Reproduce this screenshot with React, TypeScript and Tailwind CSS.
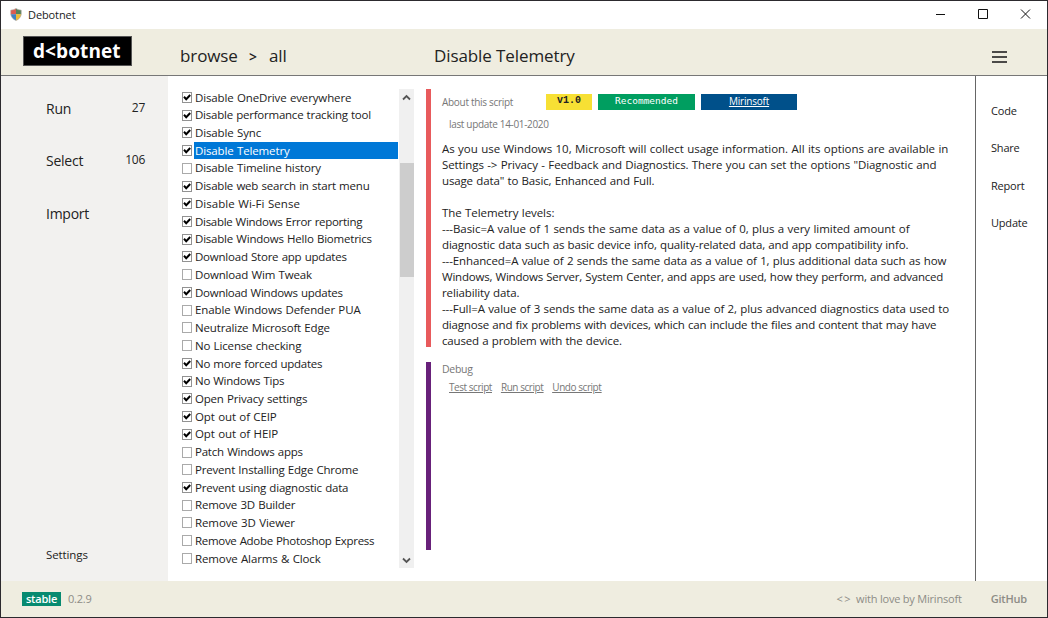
import React from "react";

type Item = { label: string; checked: boolean; tracking: string };
type Line = { text: string; tracking: string };

const items: Item[] = [
  { label: "Disable OneDrive everywhere", checked: true, tracking: "tracking-[-0.13px]" },
  { label: "Disable performance tracking tool", checked: true, tracking: "tracking-[-0.23px]" },
  { label: "Disable Sync", checked: true, tracking: "tracking-[-0.13px]" },
  { label: "Disable Telemetry", checked: true, tracking: "tracking-[-0.13px]" },
  { label: "Disable Timeline history", checked: false, tracking: "tracking-[-0.13px]" },
  { label: "Disable web search in start menu", checked: true, tracking: "tracking-[-0.2px]" },
  { label: "Disable Wi-Fi Sense", checked: true, tracking: "tracking-[0.03px]" },
  { label: "Disable Windows Error reporting", checked: true, tracking: "tracking-[-0.3px]" },
  { label: "Disable Windows Hello Biometrics", checked: true, tracking: "tracking-[-0.21px]" },
  { label: "Download Store app updates", checked: true, tracking: "tracking-[-0.22px]" },
  { label: "Download Wim Tweak", checked: false, tracking: "tracking-[-0.16px]" },
  { label: "Download Windows updates", checked: true, tracking: "tracking-[-0.26px]" },
  { label: "Enable Windows Defender PUA", checked: false, tracking: "tracking-[-0.11px]" },
  { label: "Neutralize Microsoft Edge", checked: false, tracking: "tracking-[-0.16px]" },
  { label: "No License checking", checked: false, tracking: "tracking-[-0.15px]" },
  { label: "No more forced updates", checked: true, tracking: "tracking-[-0.25px]" },
  { label: "No Windows Tips", checked: true, tracking: "tracking-[-0.27px]" },
  { label: "Open Privacy settings", checked: true, tracking: "tracking-[-0.19px]" },
  { label: "Opt out of CEIP", checked: true, tracking: "tracking-[-0.1px]" },
  { label: "Opt out of HEIP", checked: true, tracking: "tracking-[-0.08px]" },
  { label: "Patch Windows apps", checked: false, tracking: "tracking-[-0.22px]" },
  { label: "Prevent Installing Edge Chrome", checked: false, tracking: "tracking-[-0.2px]" },
  { label: "Prevent using diagnostic data", checked: true, tracking: "tracking-[-0.2px]" },
  { label: "Remove 3D Builder", checked: false, tracking: "tracking-[-0.2px]" },
  { label: "Remove 3D Viewer", checked: false, tracking: "tracking-[-0.1px]" },
  { label: "Remove Adobe Photoshop Express", checked: false, tracking: "tracking-[-0.31px]" },
  { label: "Remove Alarms & Clock", checked: false, tracking: "tracking-[-0.12px]" },
];

const description: Line[] = [
  { text: "As you use Windows 10, Microsoft will collect usage information. All its options are available in", tracking: "tracking-[-0.04px]" },
  { text: "Settings -> Privacy - Feedback and Diagnostics. There you can set the options \"Diagnostic and", tracking: "tracking-[-0.1px]" },
  { text: "usage data\" to Basic, Enhanced and Full.", tracking: "tracking-[-0.14px]" },
  { text: "", tracking: "" },
  { text: "The Telemetry levels:", tracking: "tracking-[-0.06px]" },
  { text: "---Basic=A value of 1 sends the same data as a value of 0, plus a very limited amount of", tracking: "tracking-[-0.05px]" },
  { text: "diagnostic data such as basic device info, quality-related data, and app compatibility info.", tracking: "tracking-[-0.16px]" },
  { text: "---Enhanced=A value of 2 sends the same data as a value of 1, plus additional data such as how", tracking: "tracking-[-0.12px]" },
  { text: "Windows, Windows Server, System Center, and apps are used, how they perform, and advanced", tracking: "tracking-[-0.21px]" },
  { text: "reliability data.", tracking: "tracking-[-0.12px]" },
  { text: "---Full=A value of 3 sends the same data as a value of 2, plus advanced diagnostics data used to", tracking: "tracking-[-0.1px]" },
  { text: "diagnose and fix problems with devices, which can include the files and content that may have", tracking: "tracking-[-0.18px]" },
  { text: "caused a problem with the device.", tracking: "tracking-[-0.16px]" },
];

function Shield() {
  return (
    <svg width="12" height="13" viewBox="0 0 12 13" className="mt-[7px] ml-[9px] shrink-0">
      <path d="M6 .5 4.500 1.500 .8 2.200 .8 6.500H6z" fill="#dc5b50" />
      <path d="M6 .5 7.500 1.500 11.200 2.200V6.500H6z" fill="#55845c" />
      <path d="M.8 6.200H6V12.500Q1.500 10.500 .8 6.200z" fill="#3f82c4" />
      <path d="M11.200 6.200H6V12.500Q10.500 10.500 11.200 6.200z" fill="#eebc35" />
      <path d="M6 .5Q3.700 2.200 .8 2.200V6Q1.200 10.500 6 12.500 10.800 10.500 11.200 6V2.200Q8.300 2.200 6 .5z" fill="none" stroke="#a39c92" strokeWidth=".6" />
    </svg>
  );
}

function WindowControls() {
  return (
    <svg width="100" height="28" viewBox="0 0 100 28" fill="none" stroke="#111" className="mr-[13px] ml-auto">
      <path d="M2 13.500h9M44.500 8.500h9v9h-9zM87 8.500l9 9M96 8.500l-9 9" />
    </svg>
  );
}

function CheckBox({ checked }: { checked: boolean }) {
  return (
    <svg width="10" height="11" viewBox="0 0 10 11" fill="none" className="shrink-0">
      <rect x=".5" y=".5" width="9" height="10" fill="#fff" stroke={checked ? "#929292" : "#aaa"} />
      {checked && <path d="M2 4.800 4.200 7.200 8.200 3" stroke="#000" strokeWidth="2" />}
    </svg>
  );
}

function Chevron({ down }: { down?: boolean }) {
  return (
    <svg width="9" height="7" viewBox="0 0 9 7" fill="none" stroke="#555" strokeWidth="1.800">
      <path d={down ? "M1 1.500 4.500 5 8 1.500" : "M1 5.500 4.500 2 8 5.500"} />
    </svg>
  );
}

export default function App() {
  return (
    <div className="flex h-[618px] w-[1048px] flex-col overflow-hidden border border-[#2c2a2e] bg-white font-['Open_Sans','Noto_Sans',sans-serif] text-[#222]">
      <div className="flex h-7 shrink-0">
        <Shield />
        <span className="ml-[6px] pt-[6px] text-[11px] leading-4 tracking-[-0.1px]">Debotnet</span>
        <WindowControls />
      </div>

      <header className="flex h-[47px] shrink-0 border-b border-[#777] bg-[#efede0] whitespace-nowrap">
        <div className="mt-[7px] ml-[22px] h-[30px] w-[109px] border border-[#555] bg-black pl-[9px] text-[19px] leading-[29px] font-bold tracking-[0.1px] text-white">
          d&lt;botnet
        </div>
        <div className="ml-[48px] flex w-[254px] pt-[15px] text-[17px] leading-6 tracking-[-0.1px]">
          <span className="w-[69px]">browse</span>
          <span className="w-[20px] pt-px text-[14px] font-semibold">&gt;</span>
          <span>all</span>
        </div>
        <h1 className="pt-[15px] text-[17px] leading-6 font-normal tracking-[-0.1px]">Disable Telemetry</h1>
        <svg width="15" height="12" viewBox="0 0 15 12" stroke="#4b4a48" strokeWidth="2" className="mt-[22px] mr-[40px] ml-auto">
          <path d="M0 1h15M0 6h15M0 11h15" />
        </svg>
      </header>

      <main className="flex min-h-0 flex-1">
        <nav className="flex w-[167px] shrink-0 flex-col bg-[#f2f1ef] pt-[21px] pl-[45px] text-[14px] leading-6 tracking-[-0.25px]">
          <div className="flex h-[52px] justify-between pr-[23px]">
            <span>Run</span>
            <span className="text-[12px] leading-[22px]">27</span>
          </div>
          <div className="flex h-[52.500px] justify-between pr-[23px]">
            <span>Select</span>
            <span className="text-[12px] leading-[22px]">106</span>
          </div>
          <span>Import</span>
          <span className="mt-auto pb-[14px] text-[11.500px] tracking-[-0.1px]">Settings</span>
        </nav>

        <section className="mt-[12.500px] ml-[14px] w-[216px] shrink-0">
          {items.map((item, i) => (
            <div key={item.label} className="flex h-[17.740px] items-center">
              <CheckBox checked={item.checked} />
              <span
                className={
                  "ml-[2px] h-full flex-1 pl-px text-[11.5px] leading-[18px] [word-spacing:0.5px] whitespace-nowrap " +
                  item.tracking +
                  (i === 3 ? " bg-[#0078d7] text-white" : "")
                }
              >
                {item.label}
              </span>
            </div>
          ))}
        </section>

        <div className="mt-[13px] ml-px flex h-[479px] w-[15px] shrink-0 flex-col items-center bg-[#f0f0f0]">
          <div className="flex h-[74px] items-start pt-[5px]"><Chevron /></div>
          <div className="h-[114px] w-[14px] shrink-0 bg-[#cdcdcd]" />
          <div className="mt-auto pb-[4px]"><Chevron down /></div>
        </div>

        <article className="ml-[12px] flex w-[549px] shrink-0 flex-col pt-[13px] whitespace-nowrap">
          <section className="h-[258px] border-l-[5px] border-[#e85a5c] pl-[11px]">
            <div className="flex pt-[5px]">
              <span className="w-[104px] text-[10px] leading-4 tracking-[-0.3px] text-[#777]">About this script</span>
              <span className="h-4 w-[46px] bg-[#f7e034] text-center font-['Liberation_Mono',monospace] text-[10px] leading-[14px] font-bold">v1.0</span>
              <span className="ml-[6px] h-4 w-[97px] bg-[#009e60] text-center font-['DejaVu_Sans_Mono',monospace] text-[9.500px] leading-[13px] text-white">Recommended</span>
              <a className="ml-[6px] h-4 w-[96px] bg-[#00508a] text-center text-[10px] leading-[14px] tracking-[-0.2px] text-white underline">Mirinsoft</a>
            </div>
            <div className="mt-[7px] ml-[7px] text-[10px] leading-[15px] tracking-[-0.33px] text-[#777]">last update 14-01-2020</div>
            <div className="mt-[9px] text-[11.500px] leading-4 [word-spacing:0.5px]">
              {description.map((line, i) => (
                <p key={i} className={"h-4 " + line.tracking}>{line.text}</p>
              ))}
            </div>
          </section>
          <section className="mt-[15px] h-[188px] border-l-[5px] border-[#68217a] pl-[11px] text-[#777]">
            <div className="text-[10.500px] leading-[14px] tracking-[-0.3px]">Debug</div>
            <div className="mt-[4px] ml-[7px] flex gap-[9px] text-[10px] leading-[15px] tracking-[-0.45px] underline">
              <a>Test script</a>
              <a>Run script</a>
              <a>Undo script</a>
            </div>
          </section>
        </article>

        <aside className="ml-auto flex w-[72px] shrink-0 flex-col gap-[21.300px] border-l border-[#666] pt-[27px] pl-[15px] text-[11px] leading-4 tracking-[-0.2px]">
          <a>Code</a>
          <a>Share</a>
          <a>Report</a>
          <a>Update</a>
        </aside>
      </main>

      <footer className="flex h-[36px] shrink-0 items-center bg-[#efede0] pl-[21px] text-[11px] tracking-[-0.2px] whitespace-nowrap text-[#8d8c86]">
        <span className="h-[14px] w-[39px] bg-[#078a70] text-center leading-[14px] font-semibold text-white">stable</span>
        <span className="ml-[7px]">0.2.9</span>
        <span className="ml-auto tracking-[1.500px]">&lt;&gt;</span>
        <span className="ml-[4px]">with love by Mirinsoft</span>
        <span className="mr-[20px] ml-[29px] font-semibold">GitHub</span>
      </footer>
    </div>
  );
}
